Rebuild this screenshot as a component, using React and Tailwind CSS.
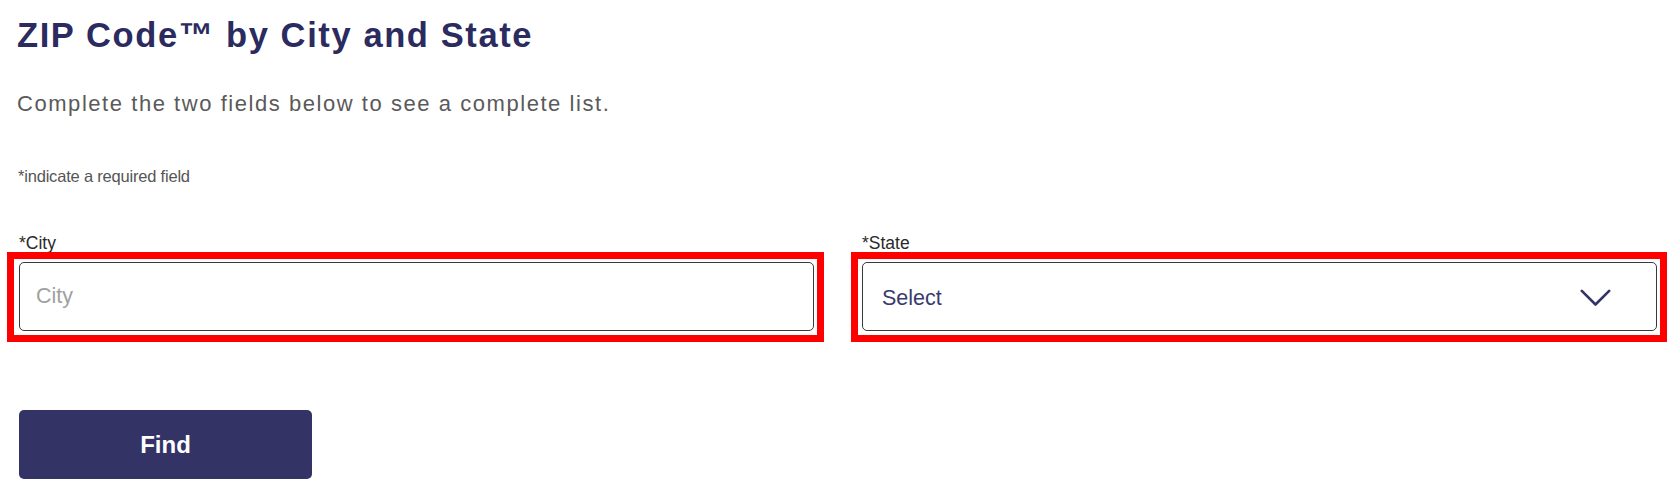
import React from "react";

function Field({ label, children, leftOff }) {
  return (
    <div className="flex flex-col">
      <label className="text-[17.5px] leading-[20px] text-[#2a2a2a] mb-[9.7px]">{label}</label>
      <div className="relative">
        {children}
        <span
          className={`pointer-events-none absolute ${leftOff} -right-[10px] -top-[10px] -bottom-[11px] border-[7px] border-[#ff0000] z-10`}
        />
      </div>
    </div>
  );
}

export default function App() {
  return (
    <div
      className="w-[1670px] h-[495px] bg-white overflow-hidden"
      style={{ fontFamily: '"Liberation Sans", Arial, sans-serif' }}
    >
      <div className="pt-[15px] pl-[17px]">
        <h1 className="text-[34.5px] leading-[40px] font-bold text-[#2b2b60] tracking-[1.6px]">
          ZIP Code™ by City and State
        </h1>
        <p className="mt-[36px] text-[22px] leading-[26px] text-[#5a5a5a] tracking-[1.55px]">
          Complete the two fields below to see a complete list.
        </p>
        <p className="mt-[49px] text-[16.5px] leading-[20px] text-[#555555] tracking-[-0.2px] pl-[1px]">
          *indicate a required field
        </p>
      </div>
      <div className="mt-[46.5px] pl-[19px] pr-[13px] grid grid-cols-2 gap-x-[48px]">
        <Field label="*City" leftOff="-left-[12px]">
          <input
            type="text"
            placeholder="City"
            className="block w-full h-[69px] border-[1.5px] border-[#3a3a3a] rounded-[5px] pl-[16px] text-[21.5px] text-[#333] placeholder:text-[#a0a0a0] outline-none bg-white"
            style={{ fontFamily: '"Liberation Sans", Arial, sans-serif' }}
          />
        </Field>
        <Field label="*State" leftOff="-left-[11px]">
          <div className="flex items-center justify-between w-full h-[69px] border-[1.5px] border-[#3a3a3a] rounded-[5px] pl-[19px] pr-[45px] bg-white">
            <span className="text-[21.5px] text-[#3a3a6e] mt-[2px]">Select</span>
            <svg width="31" height="18" viewBox="0 0 31 18" className="mt-[2px]">
              <polyline
                points="1.8,1.8 15.5,15.5 29.2,1.8"
                fill="none"
                stroke="#333366"
                strokeWidth="2.6"
                strokeLinecap="round"
                strokeLinejoin="round"
              />
            </svg>
          </div>
        </Field>
      </div>
      <div className="pl-[19px] mt-[79px]">
        <button className="w-[293px] h-[69px] rounded-[5px] bg-[#333366] text-white text-[24px] font-bold">
          Find
        </button>
      </div>
    </div>
  );
}
